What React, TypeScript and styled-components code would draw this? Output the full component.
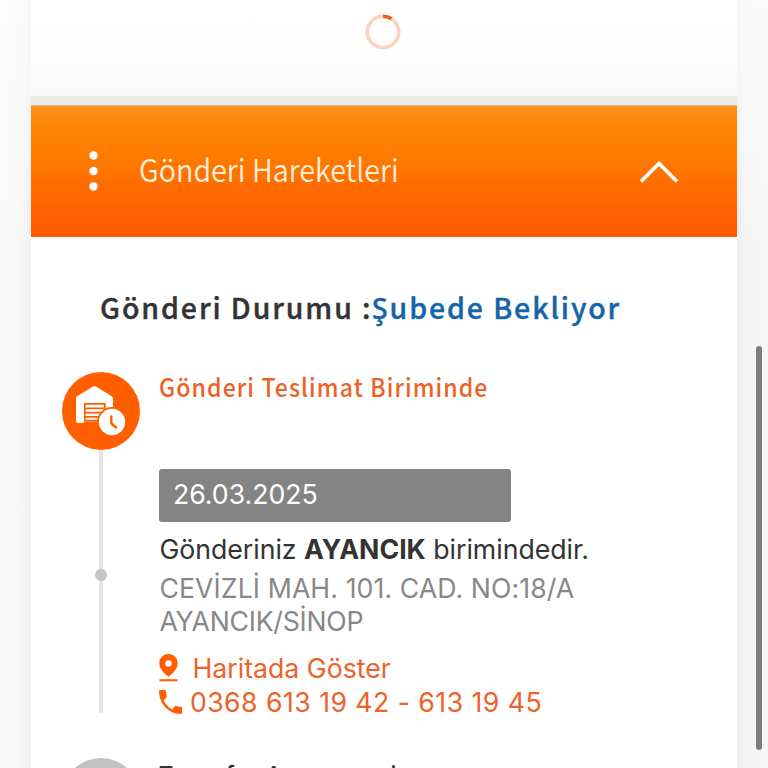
import styled, { createGlobalStyle } from "styled-components";

const history = [
  {
    title: "Gönderi Teslimat Biriminde",
    date: "26.03.2025",
    branch: "AYANCIK",
    street: "CEVİZLİ MAH. 101. CAD. NO:18/A",
    city: "AYANCIK/SİNOP",
    phone: "0368 613 19 42 - 613 19 45",
  },
];

export default function App() {
  return (
    <Page>
      <GlobalStyle />
      <LoadingPanel>
        <Spinner viewBox="0 0 36 36">
          <circle cx="18" cy="18" r="15.7" stroke="#fbd3bf" />
          <path d="M18 2.3A15.7 15.7 0 0 1 26.4 4.7" stroke="#e8621d" />
        </Spinner>
      </LoadingPanel>
      <Panel>
        <PanelHeader>
          <Dots viewBox="0 0 9 40">
            <circle cx="4.5" cy="4.5" r="4.2" />
            <circle cx="4.5" cy="20" r="4.2" />
            <circle cx="4.5" cy="35.5" r="4.2" />
          </Dots>
          <PanelTitle>Gönderi Hareketleri</PanelTitle>
          <Chevron viewBox="0 0 40 24">
            <path d="M2 21.5L20 3.5L38 21.5" />
          </Chevron>
        </PanelHeader>
        <Status>
          <StatusLabel>Gönderi Durumu :</StatusLabel>
          <StatusValue>Şubede Bekliyor</StatusValue>
        </Status>
        {history.map((item) => (
          <Step key={item.title}>
            <Rail>
              <WarehouseIcon />
              <Line>
                <Knot />
              </Line>
            </Rail>
            <StepBody>
              <StepTitle>{item.title}</StepTitle>
              <DateBox>{item.date}</DateBox>
              <Message>
                Gönderiniz <b>{item.branch}</b> birimindedir.
              </Message>
              <Address $spacing={0.08}>{item.street}</Address>
              <Address $spacing={-0.25}>{item.city}</Address>
              <MapLink>
                <PinIcon />
                Haritada Göster
              </MapLink>
              <PhoneLink>
                <PhoneIcon />
                {item.phone}
              </PhoneLink>
            </StepBody>
          </Step>
        ))}
        <Step>
          <Rail>
            <GreyCircle />
          </Rail>
          <StepBody>
            <StepTitle $dark>Transfer Aşamasında</StepTitle>
          </StepBody>
        </Step>
      </Panel>
      <ScrollThumb />
    </Page>
  );
}

function WarehouseIcon() {
  return (
    <StepIcon viewBox="0 0 78 78">
      <circle cx="39" cy="39" r="39" fill="#ff5f00" />
      <path
        d="M14 26.5Q14 25 15.2 24.3L31 14.6Q32.5 13.8 34 14.6L49.8 24.3Q51 25 51 26.5V40H44V31H22V51H16Q14 51 14 49Z"
        fill="#fff"
      />
      <path d="M22 31H43.5V49.5H22Z" fill="#fff" />
      <path
        d="M22.8 49.5V31.8H42.7V37M23 36.3H42M23 40.6H40M23 44.9H37M22.8 48.7H36"
        fill="none"
        stroke="#ff5f00"
        strokeWidth="1.7"
      />
      <circle cx="50" cy="50" r="15" fill="#ff5f00" />
      <circle cx="50" cy="50" r="13.2" fill="#fff" />
      <path
        d="M49.3 44.5V51.5L54 55.5"
        fill="none"
        stroke="#ff5f00"
        strokeWidth="2.4"
        strokeLinecap="round"
      />
    </StepIcon>
  );
}

function PinIcon() {
  return (
    <svg width="19" height="28" viewBox="0 0 19 28" fill="#ff5f00">
      <path
        fillRule="evenodd"
        d="M9.5 0C4.2 0 .3 4 .3 9.2C.3 14.5 4.5 18.8 9.5 22.8C14.5 18.8 18.7 14.5 18.7 9.2C18.7 4 14.8 0 9.5 0ZM9.5 6.2A3.2 3.2 0 1 1 9.5 12.6A3.2 3.2 0 0 1 9.5 6.2Z"
      />
      <path d="M.5 25.2H18.5V27.3H.5Z" />
    </svg>
  );
}

function PhoneIcon() {
  return (
    <svg width="23" height="24" viewBox="3 3 18 18" preserveAspectRatio="none" fill="#ff5f00">
      <path d="M6.62 10.79c1.44 2.83 3.76 5.14 6.59 6.59l2.2-2.2c.27-.27.67-.36 1.02-.24 1.12.37 2.33.57 3.57.57.55 0 1 .45 1 1V20c0 .55-.45 1-1 1-9.39 0-17-7.61-17-17 0-.55.45-1 1-1h3.5c.55 0 1 .45 1 1 0 1.25.2 2.45.57 3.57.11.35.03.74-.25 1.02l-2.2 2.2z" />
    </svg>
  );
}

const GlobalStyle = createGlobalStyle`
  * {
    box-sizing: border-box;
  }
  body {
    margin: 0;
    overflow: hidden;
    font-family: Inter, "Liberation Sans", sans-serif;
  }
`;

const headingFont = `"Noto Sans CJK SC", "Noto Sans", sans-serif`;

const Page = styled.div`
  position: relative;
  width: 768px;
  height: 768px;
  padding: 0 31px;
  overflow: hidden;
  background:
    linear-gradient(rgba(255, 255, 255, 0.6), rgba(255, 255, 255, 0) 260px),
    linear-gradient(90deg, #fbfbfb 0, #f6f6f6 22px, #efefef 31px, #ededed 737px, #f4f4f4 745px, #f6f6f6 768px);
`;

const LoadingPanel = styled.div`
  height: 96px;
  padding-top: 14px;
  display: flex;
  justify-content: center;
  align-items: flex-start;
  background: linear-gradient(#fff, #fefefe 50%, #fafafa);
`;

const Spinner = styled.svg`
  width: 36px;
  height: 36px;
  margin-right: 3px;
  fill: none;
  stroke-width: 3.6;
`;

const Panel = styled.section`
  height: 672px;
  border-top: 9px solid #ebece8;
  background: #fff;
`;

const PanelHeader = styled.header`
  height: 132px;
  display: flex;
  align-items: center;
  padding: 0 58px;
  border-top: 1px solid #dfb584;
  background: linear-gradient(#fb901c 0, #ff8605 14%, #ff7a00 40%, #ff5f00 84%, #ff5900 100%);
`;

const Dots = styled.svg`
  width: 9px;
  height: 40px;
  margin: 0 41px 1px 0;
  fill: #fff;
`;

const PanelTitle = styled.h2`
  flex: 1;
  margin: 0 0 7px;
  color: #ffefdc;
  font-family: ${headingFont};
  font-size: 31.5px;
  font-weight: 350;
  line-height: 40px;
  white-space: nowrap;
  transform: scaleX(0.913);
  transform-origin: 0 50%;
`;

const Chevron = styled.svg`
  width: 40px;
  height: 24px;
  fill: none;
  stroke: #fff;
  stroke-width: 3.6;
`;

const Status = styled.div`
  display: flex;
  height: 135px;
  padding: 50px 0 0 69px;
  font-family: ${headingFont};
  font-size: 28.5px;
  font-weight: 500;
  line-height: 40px;
  letter-spacing: 1.9px;
  white-space: nowrap;
  -webkit-text-stroke: 0.4px;
`;

const StatusLabel = styled.span`
  width: 272px;
  color: #333;
`;

const StatusValue = styled.span`
  color: #1465a8;
`;

const Step = styled.div`
  display: flex;
  height: 386px;
  padding-left: 31px;
`;

const Rail = styled.div`
  width: 78px;
  display: flex;
  flex-direction: column;
  align-items: center;
`;

const StepIcon = styled.svg`
  width: 78px;
  height: 78px;
`;

const GreyCircle = styled.div`
  width: 78px;
  height: 78px;
  border-radius: 50%;
  background: #c1c1c1;
`;

const Line = styled.div`
  width: 4px;
  height: 263px;
  padding-top: 119px;
  background: #e5e5e5;
`;

const Knot = styled.div`
  width: 12px;
  height: 12px;
  margin-left: -4px;
  border-radius: 50%;
  background: #c4c4c4;
`;

const StepBody = styled.div`
  padding-left: 19.4px;
  font-size: 26.7px;
  white-space: nowrap;
`;

const StepTitle = styled.h3<{ $dark?: boolean }>`
  width: 352px;
  height: 97.4px;
  margin: 0;
  color: ${(props) => (props.$dark ? "#333" : "#ec6226")};
  font-family: ${headingFont};
  font-size: 25px;
  font-weight: 500;
  line-height: ${(props) => (props.$dark ? 32 : 29)}px;
  letter-spacing: ${(props) => (props.$dark ? 1.4 : 1.2)}px;
  transform: scaleX(0.922);
  transform-origin: 0 0;
`;

const DateBox = styled.div`
  width: 352px;
  height: 52.5px;
  padding-left: 13.5px;
  border-radius: 3px;
  background: #848484;
  color: #fff;
  line-height: 51px;
`;

const Message = styled.p`
  height: 48px;
  margin: 0;
  color: #333;
  line-height: 55px;
  letter-spacing: -0.03px;
`;

const Address = styled.p<{ $spacing: number }>`
  height: 33px;
  margin: 0;
  color: #888;
  line-height: 36px;
  letter-spacing: ${(props) => props.$spacing}px;
`;

const MapLink = styled.div`
  display: flex;
  align-items: center;
  gap: 14px;
  height: 30px;
  margin-top: 17px;
  color: #ee622a;
`;

const PhoneLink = styled.div`
  display: flex;
  align-items: center;
  gap: 7.5px;
  height: 36px;
  margin-top: 1px;
  color: #ee622a;
  letter-spacing: 0.44px;
`;

const ScrollThumb = styled.div`
  position: absolute;
  top: 346px;
  right: 6px;
  width: 6px;
  height: 404px;
  border-radius: 3px;
  background: #7d7d7d;
`;
